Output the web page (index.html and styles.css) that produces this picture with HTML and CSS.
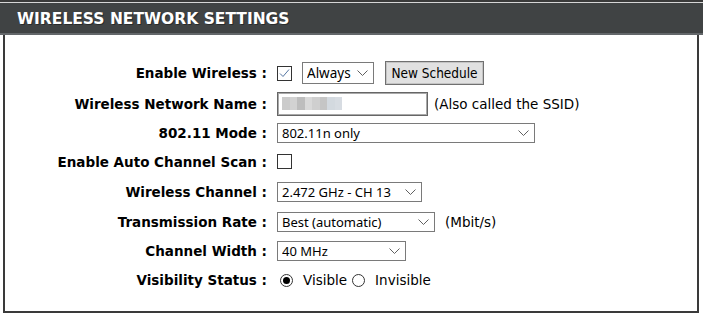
FILE: index.html
```html
<!DOCTYPE html>
<html lang="en">
<head>
    <meta charset="UTF-8">
    <meta name="viewport" content="width=device-width, initial-scale=1.0">
    <title>Wireless Network Settings</title>
    <link rel="stylesheet" href="styles.css">
</head>
<body>
    <div class="panel">
        <div class="panel-title">WIRELESS NETWORK SETTINGS</div>
        <div class="panel-body">
            <div class="form-grid">
                <div class="label">Enable Wireless :</div>
                <div class="field">
                    <span class="check">
                        <svg width="13" height="13" viewBox="0 0 13 13"><polyline points="2,6.5 5,9.5 11,2.5" fill="none" stroke="#5476a3" stroke-width="1"/></svg>
                    </span>
                    <span class="select select-always">
                        <select><option>Always</option></select>
                        <svg class="chevron" width="11" height="6" viewBox="0 0 11 6"><polyline points="0.5,0.5 5.5,5.5 10.5,0.5" fill="none" stroke="#606060" stroke-width="1"/></svg>
                    </span>
                    <button class="btn">New Schedule</button>
                </div>

                <div class="label">Wireless Network Name :</div>
                <div class="field">
                    <span class="text-box">
                        <span class="blur"><i></i><i></i><i></i><i></i><i></i><i></i><i></i><i></i></span>
                    </span>
                    <span class="note note-ssid">(Also called the SSID)</span>
                </div>

                <div class="label">802.11 Mode :</div>
                <div class="field">
                    <span class="select select-mode">
                        <select><option>802.11n only</option></select>
                        <svg class="chevron" width="11" height="6" viewBox="0 0 11 6"><polyline points="0.5,0.5 5.5,5.5 10.5,0.5" fill="none" stroke="#606060" stroke-width="1"/></svg>
                    </span>
                </div>

                <div class="label">Enable Auto Channel Scan :</div>
                <div class="field">
                    <span class="check"></span>
                </div>

                <div class="label">Wireless Channel :</div>
                <div class="field">
                    <span class="select select-channel">
                        <select><option>2.472 GHz - CH 13</option></select>
                        <svg class="chevron" width="11" height="6" viewBox="0 0 11 6"><polyline points="0.5,0.5 5.5,5.5 10.5,0.5" fill="none" stroke="#606060" stroke-width="1"/></svg>
                    </span>
                </div>

                <div class="label">Transmission Rate :</div>
                <div class="field">
                    <span class="select select-rate">
                        <select><option>Best (automatic)</option></select>
                        <svg class="chevron" width="11" height="6" viewBox="0 0 11 6"><polyline points="0.5,0.5 5.5,5.5 10.5,0.5" fill="none" stroke="#606060" stroke-width="1"/></svg>
                    </span>
                    <span class="note note-rate">(Mbit/s)</span>
                </div>

                <div class="label">Channel Width :</div>
                <div class="field">
                    <span class="select select-width">
                        <select><option>40 MHz</option></select>
                        <svg class="chevron" width="11" height="6" viewBox="0 0 11 6"><polyline points="0.5,0.5 5.5,5.5 10.5,0.5" fill="none" stroke="#606060" stroke-width="1"/></svg>
                    </span>
                </div>

                <div class="label">Visibility Status :</div>
                <div class="field">
                    <span class="radio checked"></span>
                    <span class="note radio-text">Visible</span>
                    <span class="radio radio-second"></span>
                    <span class="note radio-text">Invisible</span>
                </div>
            </div>
        </div>
    </div>
</body>
</html>
```

FILE: styles.css
```css
body {
    margin: 0;
    background-color: #fff;
    font-family: 'DejaVu Sans', sans-serif;
}
.panel {
    border-top: 2px solid #3a3a3a;
}
.panel-title {
    height: 28px;
    padding: 2px 0 0 17px;
    border-top: 1px solid #d6d6d6;
    border-bottom: 2px solid #63676a;
    background-color: #404344;
    color: #fff;
    font-weight: bold;
    font-size: 15.5px;
    line-height: 28px;
    text-shadow: 1px 1px 0 #2a2c2d;
}
.panel-body {
    margin: 0 4px 0 3px;
    padding: 23px 0 16px;
    border: 2px solid #3a3a3a;
    border-top: none;
    box-shadow: 0 3px 0 #d8d8d8;
}
.form-grid {
    display: grid;
    grid-template-columns: 262px 1fr;
    grid-template-rows: 30px 31px 28px 29px 31px 29px 29px 30px;
    column-gap: 10px;
    align-items: center;
}
.label {
    text-align: right;
    font-weight: bold;
    font-size: 13.5px;
    color: #000;
}
.field {
    display: flex;
    align-items: center;
    font-size: 13px;
}
.check {
    width: 13px;
    height: 13px;
    border: 1px solid #333;
    background-color: #fff;
    display: flex;
    align-items: center;
    justify-content: center;
}
.select {
    position: relative;
    display: inline-block;
}
.select select {
    appearance: none;
    -webkit-appearance: none;
    display: block;
    height: 20px;
    margin: 0;
    padding: 0 0 0 4px;
    border: 1px solid #7a7a7a;
    border-radius: 0;
    background-color: #fff;
    color: #000;
    font-family: 'Noto Sans', sans-serif;
    font-size: 13px;
    line-height: 18px;
}
.select .chevron {
    position: absolute;
    right: 6px;
    top: 7px;
}
.select-always {
    margin-left: 10px;
}
.select-always select {
    width: 72px;
    height: 22px;
    font-size: 13.5px;
}
.select-always .chevron {
    top: 8px;
}
.select-mode select {
    width: 258px;
}
.select-channel select {
    width: 145px;
}
.select-rate select {
    width: 158px;
}
.select-width select {
    width: 129px;
}
.btn {
    margin-left: 11px;
    width: 99px;
    height: 24px;
    padding: 0;
    border: 1px solid #707070;
    box-shadow: inset 0 0 0 1px #c4c4c4;
    background-color: #e1e1e1;
    color: #000;
    font-family: 'DejaVu Sans Condensed', sans-serif;
    font-size: 13.5px;
}
.text-box {
    box-sizing: border-box;
    width: 151px;
    height: 24px;
    padding: 3px 4px;
    border: 1px solid #666;
    box-shadow: inset 0 0 0 1px #a9a9a9;
    display: flex;
}
.blur {
    display: flex;
    height: 13px;
    margin-top: 1px;
}
.blur i {
    width: 7.5px;
    height: 13px;
    background-color: #cbcbcb;
}
.blur i:nth-child(2) { background-color: #d2d2d2; }
.blur i:nth-child(3) { background-color: #bdbdbd; }
.blur i:nth-child(4) { background-color: #d9d9d9; }
.blur i:nth-child(5) { background-color: #cfcfcf; }
.blur i:nth-child(6) { background-color: #c5c5c5; }
.blur i:nth-child(7) { background-color: #d3d9df; }
.blur i:nth-child(8) { background-color: #d7dce2; }
.note {
    font-size: 13.5px;
    color: #000;
}
.note-ssid {
    margin-left: 6px;
}
.note-rate {
    margin-left: 10px;
}
.radio {
    box-sizing: border-box;
    width: 13px;
    height: 13px;
    margin-left: 3px;
    border: 1px solid #333;
    border-radius: 50%;
    display: flex;
    align-items: center;
    justify-content: center;
}
.radio.checked::after {
    content: "";
    width: 7px;
    height: 7px;
    border-radius: 50%;
    background-color: #000;
}
.radio-text {
    margin-left: 10px;
}
.radio-second {
    margin-left: 5px;
}
```
